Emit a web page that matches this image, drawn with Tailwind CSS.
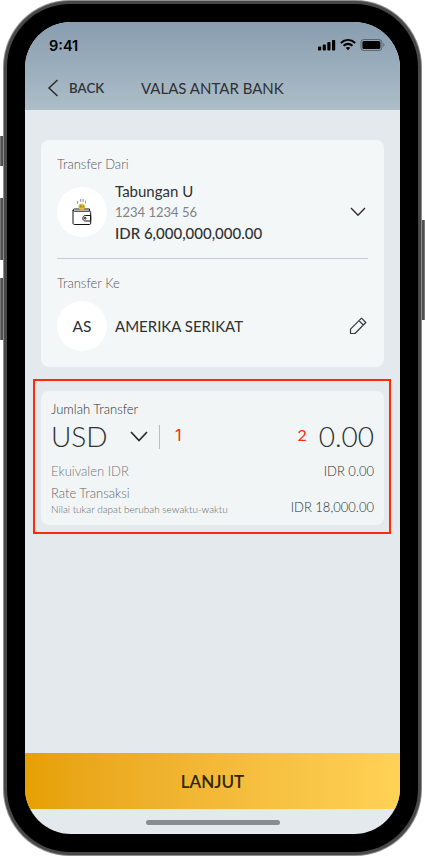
<!DOCTYPE html>
<html lang="id">
<head>
<meta charset="utf-8">
<title>Valas Antar Bank</title>
<script src="https://cdn.jsdelivr.net/npm/@tailwindcss/browser@4"></script>
</head>
<body class="bg-white">
<div class="relative w-[425px] h-[856px] overflow-hidden pl-[3px] font-['Lato',sans-serif] text-[#2f3133]">
  <!-- side buttons -->
  <div class="absolute left-0 top-[136px] w-[4px] h-[30px] bg-[#505050] border-l border-[#777]"></div>
  <div class="absolute left-0 top-[198px] w-[4px] h-[62px] bg-[#505050] border-l border-[#777]"></div>
  <div class="absolute left-0 top-[278px] w-[4px] h-[62px] bg-[#505050] border-l border-[#777]"></div>
  <div class="absolute left-[421px] top-[220px] w-[4px] h-[100px] bg-[#505050] border-r border-[#777]"></div>
  <!-- phone body -->
  <div class="relative w-[419px] h-[856px] rounded-[67px] bg-[#8c8e8d] p-px">
   <div class="h-full rounded-[66px] bg-[#484848] p-[3px]">
    <div class="h-full rounded-[63px] bg-black px-[18px] pt-[18px] pb-[17px]">
     <div class="w-[375px] h-[812px] rounded-[46px] overflow-hidden bg-[#e4e9ed] flex flex-col">
      <header class="h-[88px] shrink-0 bg-linear-to-b from-[#889db0] to-[#adbec8]">
        <div class="h-[44px] flex items-center justify-between pl-[24px] pr-[14px] pt-[3px]">
          <span class="font-['Inter',sans-serif] font-semibold text-[14.5px] text-black">9:41</span>
          <svg class="mb-[2px]" width="68" height="14" viewBox="0 0 68 14" fill="none">
            <g fill="#000"><rect x="0" y="8.500" width="3.200" height="4" rx=".9"/><rect x="4.700" y="6.500" width="3.200" height="6" rx=".9"/><rect x="9.300" y="4.100" width="3.200" height="8.400" rx=".9"/><rect x="14" y="1.900" width="3.200" height="10.600" rx=".9"/></g>
            <path d="M22.800 5c4.400-4 10-4 14.400 0M25.500 7.800c2.700-2.300 6.300-2.300 9 0" stroke="#000" stroke-width="2.100"/>
            <path d="M27.700 9.800c1.400-1.200 3.200-1.200 4.600 0L30 12.300z" fill="#000"/>
            <rect x="42.900" y="1.500" width="21" height="11" rx="3" stroke="#000" stroke-opacity=".38"/>
            <rect x="44.400" y="3" width="18" height="8" rx="1.500" fill="#000"/>
            <path d="M65.300 5v3.800c1.600-.6 1.600-3.200 0-3.800" fill="#000" fill-opacity=".4"/>
          </svg>
        </div>
        <div class="h-[44px] flex items-center pl-[22px]">
          <svg width="12" height="18" viewBox="0 0 12 18" fill="none" stroke="#292c2e" stroke-width="1.500"><path d="M10.500 1 2 9l8.500 8"/></svg>
          <span class="ml-[10px] mt-px w-[72px] text-[13.300px] font-semibold text-[#2f3438]">BACK</span>
          <h1 class="text-[15px] whitespace-nowrap">VALAS ANTAR BANK</h1>
        </div>
      </header>
      <main class="flex-1 pt-[30px]">
        <section class="mx-[16px] h-[227px] rounded-[8px] bg-[#f3f7f8] px-[16px] pt-[16px]">
          <div class="h-[103px] border-b border-[#c9cccf] mb-[17px]">
            <p class="h-[16px] leading-[17px] text-[13px] font-light text-[#55585a]">Transfer Dari</p>
            <div class="flex items-center mt-[9px]">
              <div class="size-[50px] rounded-full bg-white flex items-center justify-center">
                <svg width="20" height="28" viewBox="0 0 20 28" fill="none" stroke="#111">
                  <path d="M5.500 3v3M8.700 1v3M11 1v3M13.500 2.500v3" stroke="#999" stroke-width="1.100"/>
                  <path d="M1 12v13c0 1 .5 1.500 1.500 1.500h15c.8 0 1.200-.5 1.200-1.200V14.500c0-1-.5-1.300-1.200-1.300H2.500C.6 13.200.6 11 2.500 11h15v2"/>
                  <circle cx="9.700" cy="8.700" r="3.200" fill="#f3b929" stroke="none"/>
                  <path d="M8.200 10V7.500h1.500v1.300H8.500M11 10V8.300h1v1.200" stroke="#68905a" stroke-width=".8"/>
                  <path d="M18.700 17.500h-5.200c-3.600 0-3.600 5.500 0 5.500h5.200z"/>
                  <circle cx="13.200" cy="20.200" r=".9"/>
                </svg>
              </div>
              <div class="ml-[8px] flex-1">
                <p class="leading-[21px] text-[15px]">Tabungan U</p>
                <p class="leading-[20px] text-[13px] text-[#808284]">1234 1234 56</p>
                <p class="h-[21px] leading-[23px] text-[15px] font-medium">IDR 6,000,000,000.00</p>
              </div>
              <svg class="mr-[2px]" width="16" height="10" viewBox="0 0 16 10" fill="none" stroke="#2f3133" stroke-width="1.400"><path d="m1 1 7 7.300L15 1"/></svg>
            </div>
          </div>
          <p class="h-[16px] leading-[15px] text-[13px] font-light text-[#55585a]">Transfer Ke</p>
          <div class="flex items-center mt-[9px]">
            <div class="size-[50px] rounded-full bg-white flex items-center justify-center text-[15.500px]"><span class="mt-[2px]">AS</span></div>
            <span class="ml-[8px] flex-1 text-[15px]">AMERIKA SERIKAT</span>
            <svg class="mr-px" width="18" height="18" viewBox="0 0 18 18" fill="none" stroke="#35383a" stroke-width="1.200" stroke-linejoin="round"><path d="M1.500 16.500v-4.300L12.500 1.200 16.800 5.500 6 16.500zM10 3.700 14.300 8"/></svg>
          </div>
        </section>
        <section class="mt-[12px] mx-[8px] w-[358px] h-[155px] border-2 border-[#ff2a0a] pl-[6px] pr-[5px] pt-[10px]">
          <div class="h-[134px] rounded-[8px] bg-[#f1f5f6] px-[10px] pt-[10px]">
            <p class="h-[16px] leading-[16px] text-[13px] font-light text-[#2f3133]">Jumlah Transfer</p>
            <div class="h-[39px] flex items-center">
              <span class="w-[79px] mb-[2px] text-[28px] font-light">USD</span>
              <svg class="mb-px" width="18" height="11" viewBox="0 0 18 11" fill="none" stroke="#292b2d" stroke-width="1.700"><path d="m1 1 8 8.500L17 1"/></svg>
              <i class="ml-[11px] w-px h-[24px] bg-[#bbbec0]"></i>
              <span class="ml-[15px] mb-[3px] text-[16px] font-['Inter',sans-serif] text-[#ff2a0a]">1</span>
              <span class="ml-auto mb-[3px] text-[16px] text-[#ff2a0a]">2</span>
              <span class="ml-[12px] mb-[2px] text-[28px] font-light">0.00</span>
            </div>
            <div class="flex justify-between leading-[18px] text-[13px] mt-[6px] font-light"><span class="text-[#77797b]">Ekuivalen IDR</span><span>IDR 0.00</span></div>
            <div class="flex justify-between items-end mt-[3px] font-light">
              <div class="text-[#66686a]"><p class="leading-[20px] text-[13px]">Rate Transaksi</p><p class="leading-[13px] text-[10px]">Nilai tukar dapat berubah sewaktu-waktu</p></div>
              <span class="text-[13px] leading-[18px]">IDR 18,000.00</span>
            </div>
          </div>
        </section>
      </main>
      <button class="h-[56px] pt-[2px] shrink-0 bg-linear-to-r from-[#e6a000] to-[#ffd255] text-[17px] font-semibold text-[#2f2508]">LANJUT</button>
      <div class="h-[25px] shrink-0 pt-[11px]"><div class="mx-auto w-[134px] h-[5px] rounded-full bg-[#888d90]"></div></div>
     </div>
    </div>
   </div>
  </div>
</div>
</body>
</html>
